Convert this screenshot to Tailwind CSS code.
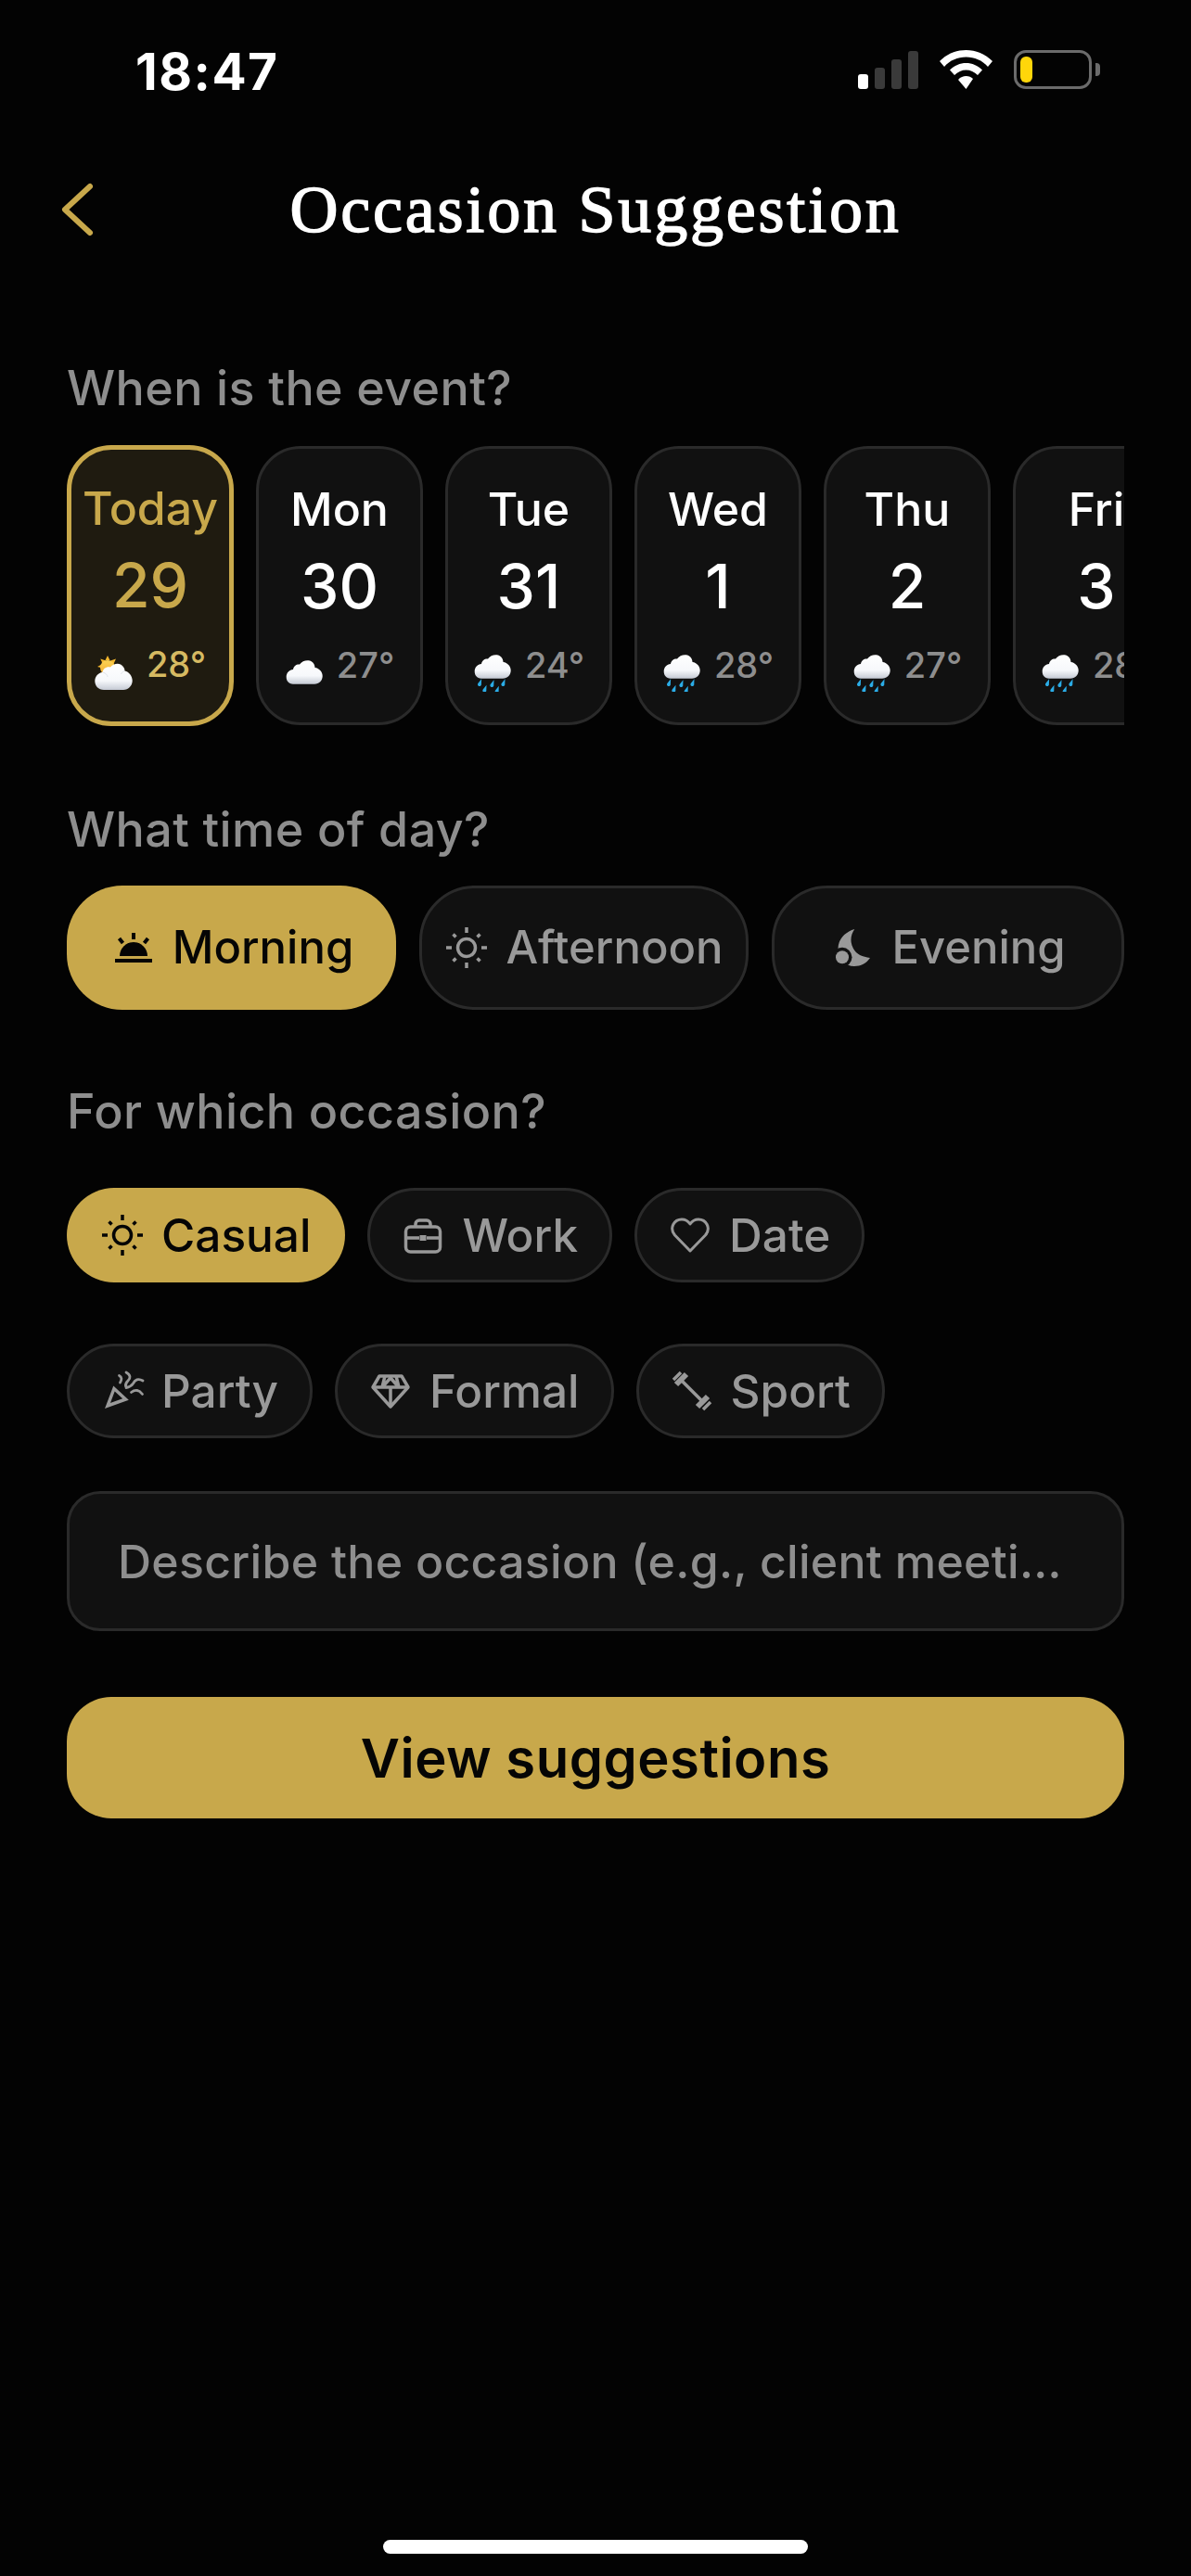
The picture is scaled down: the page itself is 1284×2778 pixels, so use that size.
<!DOCTYPE html>
<html lang="en">
  <head>
    <meta charset="utf-8"/>
    <title>Occasion Suggestion</title>
    <script src="https://cdn.jsdelivr.net/npm/@tailwindcss/browser@4"></script>
  </head>
  <body class="bg-[#030303]">
    <!-- shared weather glyphs -->
    <svg class="block w-0 h-0">
      <defs>
        <linearGradient id="cloudFill" x1="0" y1="0" x2="0" y2="1">
          <stop offset="0" stop-color="#ffffff"/>
          <stop offset="0.65" stop-color="#f6f8fb"/>
          <stop offset="1" stop-color="#c5cad4"/>
        </linearGradient>
        <linearGradient id="sunFill" x1="0" y1="0" x2="0" y2="1">
          <stop offset="0" stop-color="#fcd455"/>
          <stop offset="1" stop-color="#f2aa2e"/>
        </linearGradient>
        <path id="cloudShape" fill="url(#cloudFill)" d="M9 27.700 C4 27.700 1.700 24 1.700 20 C1.700 15.500 5 12.500 9 12 C9.500 8 13 6 16 6.500 C18.500 3 23 1.500 27 2.500 C30.500 3.500 32.500 7 32.500 10 C37 10.500 40.700 14.500 40.700 19 C40.700 24 37 27.700 32 27.700 Z"/>
        <path id="drop" fill="#2bace6" d="M1.800 -3.500 L-1.800 1 A2 2 0 1 0 1.600 2 Z"/>
        <symbol id="cloud" viewBox="0 0 42 42">
          <use href="#cloudShape" transform="translate(0 6)"/>
        </symbol>
        <symbol id="rainCloud" viewBox="0 0 42 42">
          <use href="#cloudShape"/>
          <use href="#drop" transform="translate(7.300 31.700)"/>
          <use href="#drop" transform="translate(20.700 32.700)"/>
          <use href="#drop" transform="translate(32.700 31.700)"/>
          <use href="#drop" transform="translate(12.700 38.300)"/>
          <use href="#drop" transform="translate(26 39.300)"/>
        </symbol>
        <symbol id="sunCloud" viewBox="0 0 42 42">
          <path fill="#f5b82e" d="M14 3 l2.500 5 h-5z M6.300 6.500 l6 2 l-3.500 3.500z M23 6.500 l-6 2 l3.500 3.500z M3 15 l5.500 -3 v4.500z"/>
          <circle cx="14" cy="16" r="8" fill="url(#sunFill)"/>
          <path fill="url(#cloudFill)" d="M10 40 C4 40 0.300 35.500 0.300 30.500 C0.300 25.500 4 21.500 8.500 21 C9 17 13 14.500 17 15.500 C20 12 24.500 11 28 12.500 C31 14 32.500 17 32.500 19.500 C37 20.500 40.700 25 40.700 30 C40.700 35.500 36.500 40 31 40 Z"/>
          <path fill="none" stroke="#dfe3ea" stroke-width="1" d="M9 21 C12 22 14 24 14 26 M32 19.500 C30 20.500 29 22 28.500 23"/>
        </symbol>
      </defs>
    </svg>

    <div class="h-[2778px] flex flex-col font-['Inter',sans-serif] overflow-hidden">
      <!-- status bar -->
      <div class="h-[170px] flex justify-between items-start pt-[55px] pl-[146px] pr-[98px]">
        <span class="text-[55px] leading-[44px] font-bold text-white tracking-[1.500px]">18:47</span>
        <div class="flex items-start -mt-[1px]">
          <div class="flex items-end gap-[7px] h-[42px]">
            <div class="w-[11px] h-[16px] rounded-[3px] bg-white"></div>
            <div class="w-[11px] h-[23px] rounded-[3px] bg-[#3a3a3a]"></div>
            <div class="w-[11px] h-[32px] rounded-[3px] bg-[#3a3a3a]"></div>
            <div class="w-[11px] h-[41px] rounded-[3px] bg-[#3a3a3a]"></div>
          </div>
          <svg class="ml-[23px]" width="57" height="42" viewBox="0 0 57 42" fill="#fff">
            <path d="M28.5 0 C39 0 49 4 57 12 L52 18 C46 11 37.500 7.500 28.500 7.500 C19.500 7.500 11 11 5 18 L0 12 C8 4 18 0 28.500 0Z"/>
            <path d="M28.500 14 C35 14 41 16.500 46 21.500 L41 27 C37.500 23.500 33 21.500 28.500 21.500 C24 21.500 19.500 23.500 16 27 L11 21.500 C16 16.500 22 14 28.500 14Z"/>
            <path d="M28.500 28 C31.500 28 34 29 36 31 L28.500 42 L20 32 C22.500 29 25.500 28 28.500 28Z"/>
          </svg>
          <div class="ml-[23px] w-[84px] h-[42px] rounded-[13px] border-[3px] border-[#6b6b6b] pl-[4px] py-[4px]">
            <div class="w-[13px] h-full rounded-[6px] bg-[#ffd60a]"></div>
          </div>
          <div class="ml-[4px] mt-[14px] w-[5px] h-[14px] rounded-r-[4px] bg-[#6b6b6b]"></div>
        </div>
      </div>

      <!-- title bar -->
      <div class="h-[112px] grid grid-cols-[1fr_auto_1fr] items-center">
        <svg class="ml-[64px]" width="40" height="62" viewBox="0 0 40 62" fill="none" stroke="#c8a84b" stroke-width="6" stroke-linecap="round" stroke-linejoin="round">
          <path d="M33 6 L6 31 L33 56"/>
        </svg>
        <h1 class="font-['Liberation_Serif',serif] text-[72px] leading-[112px] text-white tracking-[2.800px] [-webkit-text-stroke:1.500px_white]">Occasion Suggestion</h1>
        <div></div>
      </div>

      <div class="px-[72px] mt-[108px]">
        <p class="text-[52px] leading-[58px] font-medium text-[#8e8e8e] tracking-[0.4px]">When is the event?</p>

        <!-- day picker, cut off at the content edge -->
        <div class="mt-[32px] flex items-center gap-[24px] overflow-hidden">
          <div class="shrink-0 w-[180px] rounded-[48px] border-[5px] border-[#c8a84b] bg-[#1f1b10] flex flex-col items-center pt-[34px] pb-[33px]">
            <span class="text-[50px] leading-[58px] font-medium text-[#c8a84b]">Today</span>
            <span class="mt-[14px] text-[66px] leading-[80px] font-medium text-[#c8a84b]">29</span>
            <div class="mt-[24px] h-[50px] flex items-start gap-[14px]">
              <svg class="mt-[9px]" width="42" height="42"><use href="#sunCloud"/></svg>
              <span class="text-[38px] leading-[42px] font-medium text-[#d6ba62]">28°</span>
            </div>
          </div>
          <div class="shrink-0 w-[180px] rounded-[48px] border-[3px] border-[#2a2a2a] bg-[#111111] flex flex-col items-center pt-[36px] pb-[33px]">
            <span class="text-[50px] leading-[58px] font-medium text-white">Mon</span>
            <span class="mt-[14px] text-[66px] leading-[80px] font-medium text-white">30</span>
            <div class="mt-[24px] h-[50px] flex items-start gap-[14px]">
              <svg class="mt-[8px]" width="42" height="42"><use href="#cloud"/></svg>
              <span class="text-[38px] leading-[42px] font-medium text-[#8e8e8e]">27°</span>
            </div>
          </div>
          <div class="shrink-0 w-[180px] rounded-[48px] border-[3px] border-[#2a2a2a] bg-[#111111] flex flex-col items-center pt-[36px] pb-[33px]">
            <span class="text-[50px] leading-[58px] font-medium text-white">Tue</span>
            <span class="mt-[14px] text-[66px] leading-[80px] font-medium text-white">31</span>
            <div class="mt-[24px] h-[50px] flex items-start gap-[14px]">
              <svg class="mt-[8px]" width="42" height="42"><use href="#rainCloud"/></svg>
              <span class="text-[38px] leading-[42px] font-medium text-[#8e8e8e]">24°</span>
            </div>
          </div>
          <div class="shrink-0 w-[180px] rounded-[48px] border-[3px] border-[#2a2a2a] bg-[#111111] flex flex-col items-center pt-[36px] pb-[33px]">
            <span class="text-[50px] leading-[58px] font-medium text-white">Wed</span>
            <span class="mt-[14px] text-[66px] leading-[80px] font-medium text-white">1</span>
            <div class="mt-[24px] h-[50px] flex items-start gap-[14px]">
              <svg class="mt-[8px]" width="42" height="42"><use href="#rainCloud"/></svg>
              <span class="text-[38px] leading-[42px] font-medium text-[#8e8e8e]">28°</span>
            </div>
          </div>
          <div class="shrink-0 w-[180px] rounded-[48px] border-[3px] border-[#2a2a2a] bg-[#111111] flex flex-col items-center pt-[36px] pb-[33px]">
            <span class="text-[50px] leading-[58px] font-medium text-white">Thu</span>
            <span class="mt-[14px] text-[66px] leading-[80px] font-medium text-white">2</span>
            <div class="mt-[24px] h-[50px] flex items-start gap-[14px]">
              <svg class="mt-[8px]" width="42" height="42"><use href="#rainCloud"/></svg>
              <span class="text-[38px] leading-[42px] font-medium text-[#8e8e8e]">27°</span>
            </div>
          </div>
          <div class="shrink-0 w-[180px] rounded-[48px] border-[3px] border-[#2a2a2a] bg-[#111111] flex flex-col items-center pt-[36px] pb-[33px]">
            <span class="text-[50px] leading-[58px] font-medium text-white">Fri</span>
            <span class="mt-[14px] text-[66px] leading-[80px] font-medium text-white">3</span>
            <div class="mt-[24px] h-[50px] flex items-start gap-[14px]">
              <svg class="mt-[8px]" width="42" height="42"><use href="#rainCloud"/></svg>
              <span class="text-[38px] leading-[42px] font-medium text-[#8e8e8e]">28°</span>
            </div>
          </div>
        </div>

        <p class="mt-[83px] text-[52px] leading-[58px] font-medium text-[#8e8e8e] tracking-[0.4px]">What time of day?</p>

        <div class="mt-[31px] flex gap-[25px]">
          <div class="w-[355px] h-[134px] rounded-[60px] bg-[#c8a84b] flex items-center justify-center gap-[18px] text-[#050505]">
            <svg class="ml-[2px]" width="48" height="48" viewBox="0 0 48 48" fill="#050505" stroke="#050505">
              <path stroke="none" d="M9 33 a15 15 0 0 1 30 0 z"/>
              <path fill="none" stroke-width="4" d="M4 38 H44 M24 8 V15 M8.500 14 L12.500 19 M39.500 14 L35.500 19"/>
            </svg>
            <span class="text-[49px] leading-[60px] font-medium">Morning</span>
          </div>
          <div class="w-[355px] h-[134px] rounded-[60px] border-[3px] border-[#2a2a2a] bg-[#111111] flex items-center justify-center gap-[18px] text-[#999999]">
            <svg width="48" height="48" viewBox="0 0 48 48" fill="none" stroke="#999999" stroke-width="3.500">
              <circle cx="24" cy="24" r="9.500"/>
              <path d="M24 2 V8 M24 40 V46 M2 24 H8 M40 24 H46 M9.500 9.500 L12.500 12.500 M35.500 35.500 L38.500 38.500 M38.500 9.500 L35.500 12.500 M12.500 35.500 L9.500 38.500"/>
            </svg>
            <span class="text-[49px] leading-[60px] font-medium">Afternoon</span>
          </div>
          <div class="flex-1 h-[134px] rounded-[60px] border-[3px] border-[#2a2a2a] bg-[#111111] flex items-center justify-center gap-[18px] text-[#999999]">
            <svg width="48" height="48" viewBox="0 0 48 48" fill="#999999">
              <path d="M26.300 4 C16 7 8.500 15 8.500 25 C8.500 36 16 44 26 44 C33 44 39 41 43 35 C35 34 28 31 25 25 C21 18 22 10 26.300 4Z"/>
              <circle cx="13" cy="34.300" r="10.500" fill="#111111"/>
              <circle cx="13" cy="34.300" r="7"/>
            </svg>
            <span class="text-[49px] leading-[60px] font-medium">Evening</span>
          </div>
        </div>

        <p class="mt-[81px] text-[52px] leading-[58px] font-medium text-[#8e8e8e] tracking-[0.4px]">For which occasion?</p>

        <!-- occasion chips -->
        <div class="mt-[53px] flex flex-wrap gap-x-[24px] gap-y-[66px]">
          <div class="h-[102px] rounded-full bg-[#c8a84b] pl-[36px] pr-[37px] flex items-center gap-[18px] text-[#050505]">
            <svg width="48" height="48" viewBox="0 0 48 48" fill="none" stroke="#050505" stroke-width="3.500">
              <circle cx="24" cy="24" r="9.500"/>
              <path d="M24 2 V8 M24 40 V46 M2 24 H8 M40 24 H46 M9.500 9.500 L12.500 12.500 M35.500 35.500 L38.500 38.500 M38.500 9.500 L35.500 12.500 M12.500 35.500 L9.500 38.500"/>
            </svg>
            <span class="text-[49.500px] leading-[58px] font-medium">Casual</span>
          </div>
          <div class="h-[102px] rounded-full border-[3px] border-[#2a2a2a] bg-[#111111] pl-[33px] pr-[34px] flex items-center gap-[18px] text-[#999999]">
            <svg width="48" height="48" viewBox="0 0 48 48" fill="none" stroke="#999999" stroke-width="3.500">
              <rect x="5.500" y="15" width="37" height="27" rx="5"/>
              <path d="M16 15 V12 a4 4 0 0 1 4 -4 h8 a4 4 0 0 1 4 4 V15 M5.500 27 H20 M28 27 H42.500"/>
              <rect x="20.500" y="24" width="7" height="6" fill="#999999" stroke="none"/>
            </svg>
            <span class="text-[49.500px] leading-[58px] font-medium">Work</span>
          </div>
          <div class="h-[102px] rounded-full border-[3px] border-[#2a2a2a] bg-[#111111] pl-[33px] pr-[34px] flex items-center gap-[18px] text-[#999999]">
            <svg width="48" height="48" viewBox="0 0 48 48" fill="none" stroke="#999999" stroke-width="3">
              <path d="M24 41 L7.500 24 C1 16 7 7 15 7 C19 7 22 9 24 12 C26 9 29 7 33 7 C41 7 47 16 40.500 24 Z" stroke-linejoin="round"/>
            </svg>
            <span class="text-[49.500px] leading-[58px] font-medium">Date</span>
          </div>
          <div class="h-[102px] rounded-full border-[3px] border-[#2a2a2a] bg-[#111111] pl-[33px] pr-[34px] flex items-center gap-[18px] text-[#999999]">
            <svg width="48" height="48" viewBox="0 0 48 48" fill="none" stroke="#999999" stroke-width="2.800" stroke-linecap="round">
              <path stroke-width="3.500" stroke-linejoin="miter" d="M8 40 L15 21.500 L27.500 33 Z"/>
              <path d="M20.500 7.500 C23.500 9 23.500 12 21.500 15 M28 4 C33 7 33 10 30 13 C27.500 15.500 27 17 27.500 19 M46 13 C41 10 37.500 12 35.500 16 C33.500 19 31 20 28 20.500 M45.500 27.500 C42 23 38 22 33.500 25.500"/>
            </svg>
            <span class="text-[49.500px] leading-[58px] font-medium">Party</span>
          </div>
          <div class="h-[102px] rounded-full border-[3px] border-[#2a2a2a] bg-[#111111] pl-[33px] pr-[34px] flex items-center gap-[18px] text-[#999999]">
            <svg width="48" height="48" viewBox="0 0 48 48" fill="none" stroke="#999999" stroke-width="3.500" stroke-linejoin="round">
              <path d="M12 8 H36 L43 20 L24 41 L5 20 Z"/>
              <path d="M5 20 H43 M18 8 L15 20 L24 10 L33 20 L30 8 M24 20 V41"/>
            </svg>
            <span class="text-[49.500px] leading-[58px] font-medium">Formal</span>
          </div>
          <div class="h-[102px] rounded-full border-[3px] border-[#2a2a2a] bg-[#111111] pl-[33px] pr-[34px] flex items-center gap-[18px] text-[#999999]">
            <svg width="48" height="48" viewBox="0 0 48 48" fill="none" stroke="#999999">
              <path stroke-width="3.500" d="M13 13 L35 35"/>
              <path stroke-width="6" d="M7 17 L18 6 M30 41 L41 30"/>
              <path stroke-width="3.500" d="M4 12 L12 4 M36 44 L44 36"/>
            </svg>
            <span class="text-[49.500px] leading-[58px] font-medium">Sport</span>
          </div>
        </div>

        <div class="mt-[57px] h-[151px] rounded-[36px] border-[3px] border-[#2a2a2a] bg-[#111111] flex items-center pl-[52px]">
          <span class="text-[50px] leading-[58px] font-medium text-[#8e8e8e] tracking-[0.28px]">Describe the occasion (e.g., client meeti…</span>
        </div>

        <div class="mt-[71px] h-[131px] rounded-[48px] bg-[#c8a84b] flex items-center justify-center">
          <span class="text-[58px] leading-[64px] font-semibold text-[#050505] tracking-[0.5px]">View suggestions</span>
        </div>
      </div>

      <!-- home indicator -->
      <div class="mt-auto mb-[24px] mx-auto w-[458px] h-[15px] rounded-full bg-white"></div>
    </div>
  </body>
</html>
